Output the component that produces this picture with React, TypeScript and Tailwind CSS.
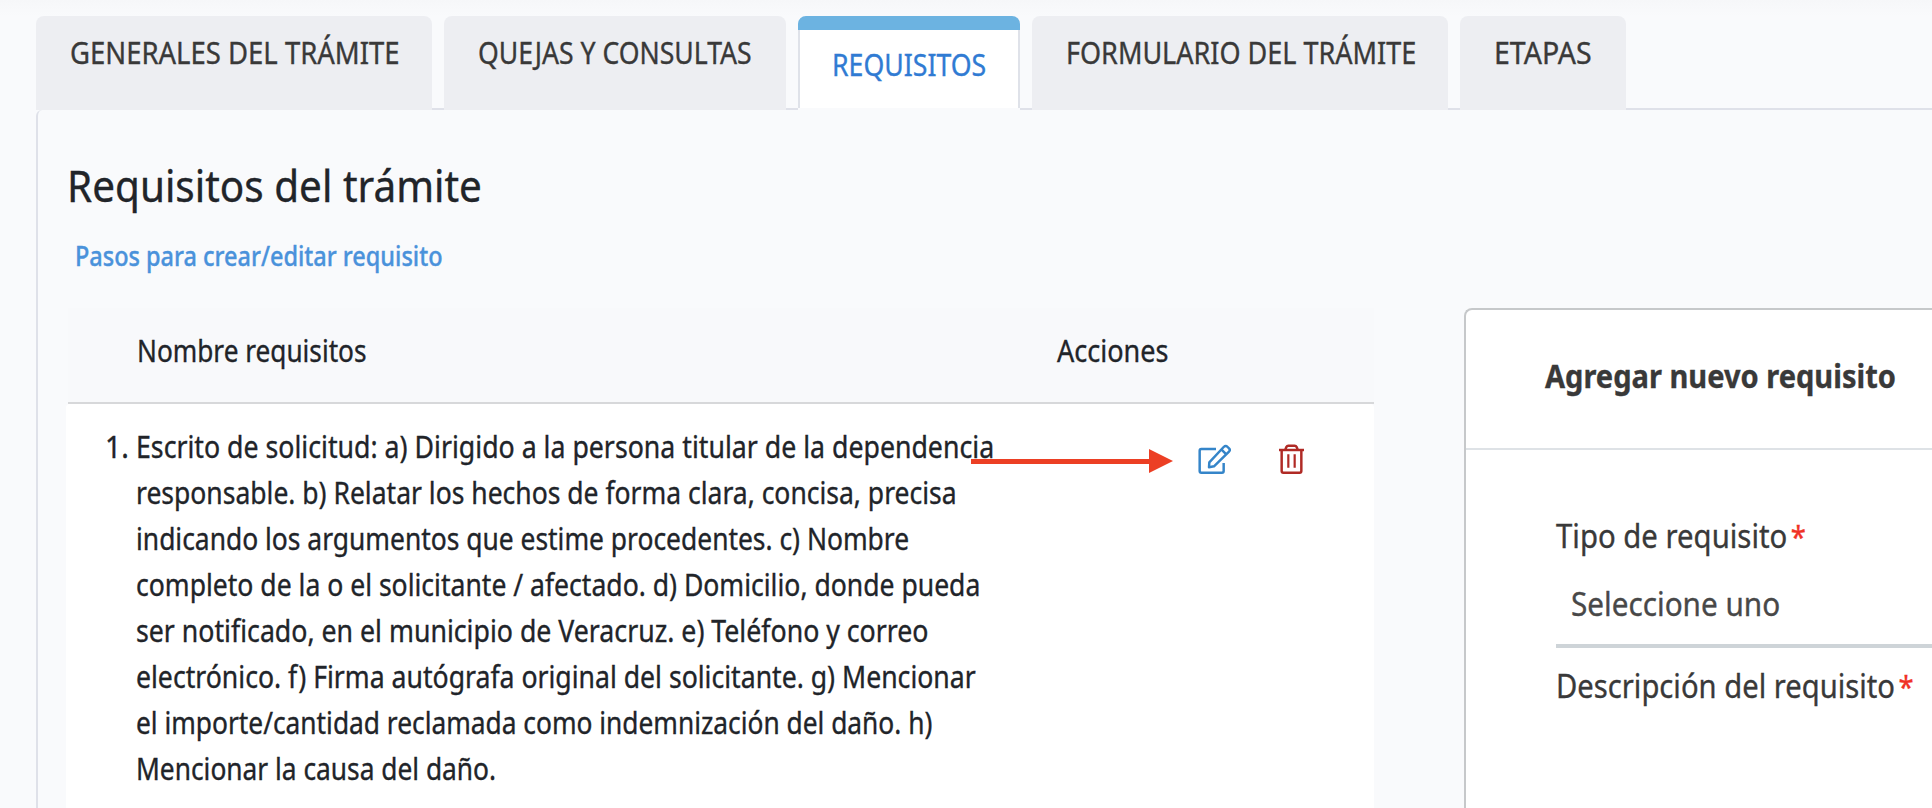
import React from "react";

const lines = [
  { text: "Escrito de solicitud: a) Dirigido a la persona titular de la dependencia", cls: "scale-x-[0.890]" },
  { text: "responsable. b) Relatar los hechos de forma clara, concisa, precisa", cls: "scale-x-[0.883]" },
  { text: "indicando los argumentos que estime procedentes. c) Nombre", cls: "scale-x-[0.880]" },
  { text: "completo de la o el solicitante / afectado. d) Domicilio, donde pueda", cls: "scale-x-[0.885]" },
  { text: "ser notificado, en el municipio de Veracruz. e) Teléfono y correo", cls: "scale-x-[0.890]" },
  { text: "electrónico. f) Firma autógrafa original del solicitante. g) Mencionar", cls: "scale-x-[0.887]" },
  { text: "el importe/cantidad reclamada como indemnización del daño. h)", cls: "scale-x-[0.877]" },
  { text: "Mencionar la causa del daño.", cls: "scale-x-[0.877]" },
];

const tabs = [
  { label: "GENERALES DEL TRÁMITE", width: "w-[396px]", cls: "scale-x-[0.916]" },
  { label: "QUEJAS Y CONSULTAS", width: "w-[342px]", cls: "scale-x-[0.887]" },
  { label: "REQUISITOS", width: "w-[222px]", cls: "scale-x-[0.889]", active: true },
  { label: "FORMULARIO DEL TRÁMITE", width: "w-[416px]", cls: "scale-x-[0.900]" },
  { label: "ETAPAS", width: "w-[166px]", cls: "scale-x-[0.950]" },
];

/* Single line of text set in a slightly condensed width. */
function Line({ cls, children }: { cls: string; children: React.ReactNode }) {
  return <span className={`block w-max origin-left whitespace-nowrap ${cls}`}>{children}</span>;
}

function EditIcon() {
  return (
    <svg viewBox="0 0 99 90" className="h-[30px] w-[33px]" fill="none" stroke="#3585c9" strokeWidth="7.4" strokeLinejoin="round">
      <path d="M54 15H10Q5 15 5 20V81Q5 86 10 86H72Q77 86 77 81V57" />
      <path d="M33 70L34 55L77 9Q83 3 89 9L93 13Q98 18 93 23L48 67Z" />
      <path d="M70 16L85 31" />
    </svg>
  );
}

function TrashIcon() {
  return (
    <svg viewBox="0 0 75 90" className="h-[30px] w-[25px]" fill="none" stroke="#b02a25" strokeWidth="7.4">
      <path d="M0 18H75" />
      <path d="M19 17L22 9Q24 5 28 5H47Q51 5 53 9L56 17" />
      <path d="M8 18V81Q8 86 13 86H62Q67 86 67 81V18" />
      <path d="M28 31V71M47 31V71" strokeWidth="6.6" />
    </svg>
  );
}

export default function App() {
  return (
    <div className="relative flex h-[808px] w-[1932px] flex-col overflow-hidden bg-[#f9fafc] font-['Noto_Sans','Open_Sans',sans-serif] text-[30px] text-[#212429] [-webkit-text-stroke:0.35px]">
      <header className="h-4 shrink-0 bg-linear-to-b from-[#f6f7f9] to-[#f9fafc]" />

      <nav className="flex h-[94px] shrink-0 pl-9">
        {tabs.map((t) => (
          <React.Fragment key={t.label}>
            {t.active ? (
              <div className={`flex shrink-0 flex-col overflow-hidden rounded-t-lg text-[#307bd3] ${t.width}`}>
                <div className="h-[14px] bg-[#6cb3e1]" />
                <div className="h-[78px] border-x-2 border-[#dfe2e9] bg-white pl-[32px] pt-[12px] leading-[46px]">
                  <Line cls={t.cls}>{t.label}</Line>
                </div>
              </div>
            ) : (
              <div className={`shrink-0 rounded-t-lg bg-[#edeef2] pl-[34px] pt-[14px] leading-[46px] text-[#393939] ${t.width}`}>
                <Line cls={t.cls}>{t.label}</Line>
              </div>
            )}
            {t.label !== "ETAPAS" && <div className="w-3 shrink-0 border-b-2 border-[#dfe1e9]" />}
          </React.Fragment>
        ))}
        <div className="grow border-b-2 border-[#dfe1e9]" />
      </nav>

      <main className="ml-9 flex grow flex-col rounded-tl-[6px] border-l-2 border-[#dfe1e9]">
        <h1 className="mt-[45px] h-[60px] pl-[29px] text-[44px] leading-[60px]">
          <Line cls="scale-x-[0.920]">Requisitos del trámite</Line>
        </h1>
        <a className="mt-[21px] block h-[40px] pl-[37px] text-[27px] font-medium leading-[40px] text-[#4a92db]">
          <Line cls="scale-x-[0.870]">Pasos para crear/editar requisito</Line>
        </a>

        <div className="mt-[32px] flex grow">
          <section className="ml-7 flex w-[1308px] shrink-0 flex-col">
            <div className="ml-[2px] flex h-[96px] shrink-0 border-b-2 border-[#d7d8da] bg-[#f8f9fb] pt-[20px] leading-[46px]">
              <div className="w-[919px] pl-[69px]">
                <Line cls="scale-x-[0.873]">Nombre requisitos</Line>
              </div>
              <div className="pl-[70px]">
                <Line cls="scale-x-[0.900]">Acciones</Line>
              </div>
            </div>
            <div className="flex grow rounded-t bg-white">
              <ol className="w-[1132px] shrink-0 pt-5">
                <li className="flex leading-[46px]">
                  <span className="w-[70px] shrink-0 pl-[39px]">
                    <Line cls="scale-x-[0.95]">1.</Line>
                  </span>
                  <div>
                    {lines.map((l) => (
                      <Line key={l.text} cls={l.cls}>{l.text}</Line>
                    ))}
                  </div>
                </li>
              </ol>
              <div className="flex h-[30px] gap-12 pt-[40px]">
                <EditIcon />
                <TrashIcon />
              </div>
            </div>
          </section>

          <section className="ml-[90px] flex grow flex-col rounded-tl-lg border-l-2 border-t-2 border-[#c6c8ca] bg-white text-[33px] text-[#393939]">
            <h2 className="h-[140px] shrink-0 border-b-2 border-[#dee2e6] pl-[79px] pt-[43px] font-bold leading-[46px]">
              <Line cls="scale-x-[0.880]">Agregar nuevo requisito</Line>
            </h2>
            <div className="flex flex-col pl-[90px] pt-[64px]">
              <label className="-mt-px h-[47px] leading-[46px]">
                <Line cls="scale-x-[0.889]">
                  Tipo de requisito<span className="pl-[4px] text-[31px] text-[#f03226]">*</span>
                </Line>
              </label>
              <div className="mt-[12px] h-[76px] border-b-4 border-[#ced4d8] pl-[15px] pt-[9px] leading-[46px] text-[#484848]">
                <Line cls="scale-x-[0.900]">Seleccione uno</Line>
              </div>
              <label className="mt-[15px] h-[46px] leading-[46px]">
                <Line cls="scale-x-[0.885]">
                  Descripción del requisito<span className="pl-[4px] text-[31px] text-[#f03226]">*</span>
                </Line>
              </label>
            </div>
          </section>
        </div>
      </main>

      <svg viewBox="0 0 202 24" className="absolute left-[971px] top-[449px] h-[24px] w-[202px]" fill="#ec3f24">
        <path d="M0 10H178V0L202 12L178 24V15H0Z" />
      </svg>
    </div>
  );
}
